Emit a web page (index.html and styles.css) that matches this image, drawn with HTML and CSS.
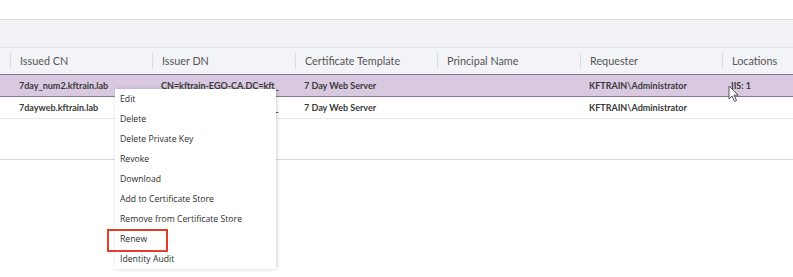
FILE: index.html
```html
<!DOCTYPE html>
<html lang="en">
<head>
  <meta charset="UTF-8" />
  <title>Certificates</title>
  <link rel="stylesheet" href="styles.css">
</head>
<body>
  <div class="toolbar"></div>

  <div class="grid">
    <div class="row head">
      <div class="cell lead"></div>
      <div class="cell">Issued CN</div>
      <div class="cell">Issuer DN</div>
      <div class="cell">Certificate Template</div>
      <div class="cell">Principal Name</div>
      <div class="cell">Requester</div>
      <div class="cell">Locations</div>
    </div>
    <div class="row selected">
      <div class="cell lead"></div>
      <div class="cell">7day_num2.kftrain.lab</div>
      <div class="cell">CN=kftrain-EGO-CA,DC=kft_</div>
      <div class="cell">7 Day Web Server</div>
      <div class="cell"></div>
      <div class="cell">KFTRAIN\Administrator</div>
      <div class="cell">IIS: 1</div>
    </div>
    <div class="row">
      <div class="cell lead"></div>
      <div class="cell">7dayweb.kftrain.lab</div>
      <div class="cell">CN=kftrain-EGO-CA,DC=kft_</div>
      <div class="cell">7 Day Web Server</div>
      <div class="cell"></div>
      <div class="cell">KFTRAIN\Administrator</div>
      <div class="cell"></div>
    </div>
    <div class="filler"></div>
  </div>

  <ul class="context-menu">
    <li>Edit</li>
    <li>Delete</li>
    <li>Delete Private Key</li>
    <li>Revoke</li>
    <li>Download</li>
    <li>Add to Certificate Store</li>
    <li>Remove from Certificate Store</li>
    <li class="marked">Renew</li>
    <li>Identity Audit</li>
  </ul>

  <svg class="cursor" width="12" height="18" viewBox="0 0 12 18">
    <path d="M1 1 L1 14 L4 11 L6.5 16.5 L8.5 15.5 L6 10.2 L10.2 10.2 Z" fill="#fff" stroke="#555" stroke-width="1" stroke-linejoin="round"/>
  </svg>
</body>
</html>
```

FILE: styles.css
```css
body {
  margin: 0;
  background: #fff;
  font-family: 'Lato', 'Open Sans', sans-serif;
  color: #333;
  overflow: hidden;
}

.toolbar {
  margin-top: 19px;
  height: 27px;
  border-top: 1px solid #dcdcdf;
  border-bottom: 1px solid #e4e5e8;
  background: #f0f2f5;
}

.grid {
  width: 100%;
}

.row {
  display: grid;
  grid-template-columns: 10px 142px 143px 142px 143px 142px 1fr;
  height: 21px;
  align-items: center;
  border-bottom: 1px solid #e6e6ea;
  font-size: 9px;
  font-weight: 700;
  color: #3a3a3a;
}

.row.head {
  height: 26px;
  background: #f3f4f7;
  border-bottom: 1px solid #cfcfd6;
  font-size: 10.8px;
  font-weight: 400;
  color: #555;
}

.row.selected {
  height: 21px;
  background: #d8c9e0;
  border-bottom: 1px solid #8a7797;
  margin-top: -1px;
  border-top: 1px solid #8a7797;
}

.cell {
  padding-left: 9px;
  white-space: nowrap;
  overflow: hidden;
}

.row.head .cell {
  border-left: 1px solid #dcdde2;
  line-height: 16px;
}

.row.head .cell.lead {
  border-left: none;
}

.cell.lead {
  padding: 0;
}

.filler {
  height: 40px;
  border-bottom: 1px solid #dadadf;
}

.context-menu {
  position: absolute;
  left: 115px;
  top: 89px;
  width: 161px;
  margin: 0;
  padding: 0;
  list-style: none;
  background: #fff;
  box-shadow: 1px 0 4px rgba(0, 0, 0, 0.18);
  font-family: 'Open Sans', sans-serif;
  font-size: 8.7px;
  color: #2e2e2e;
}

.context-menu li {
  height: 20px;
  line-height: 20px;
  padding-left: 5px;
  position: relative;
}

.context-menu li.marked::after {
  content: "";
  position: absolute;
  left: -8px;
  top: 0;
  width: 57px;
  height: 19px;
  border: 2px solid #e63d2a;
}

.cursor {
  position: absolute;
  left: 728px;
  top: 85px;
}
```
